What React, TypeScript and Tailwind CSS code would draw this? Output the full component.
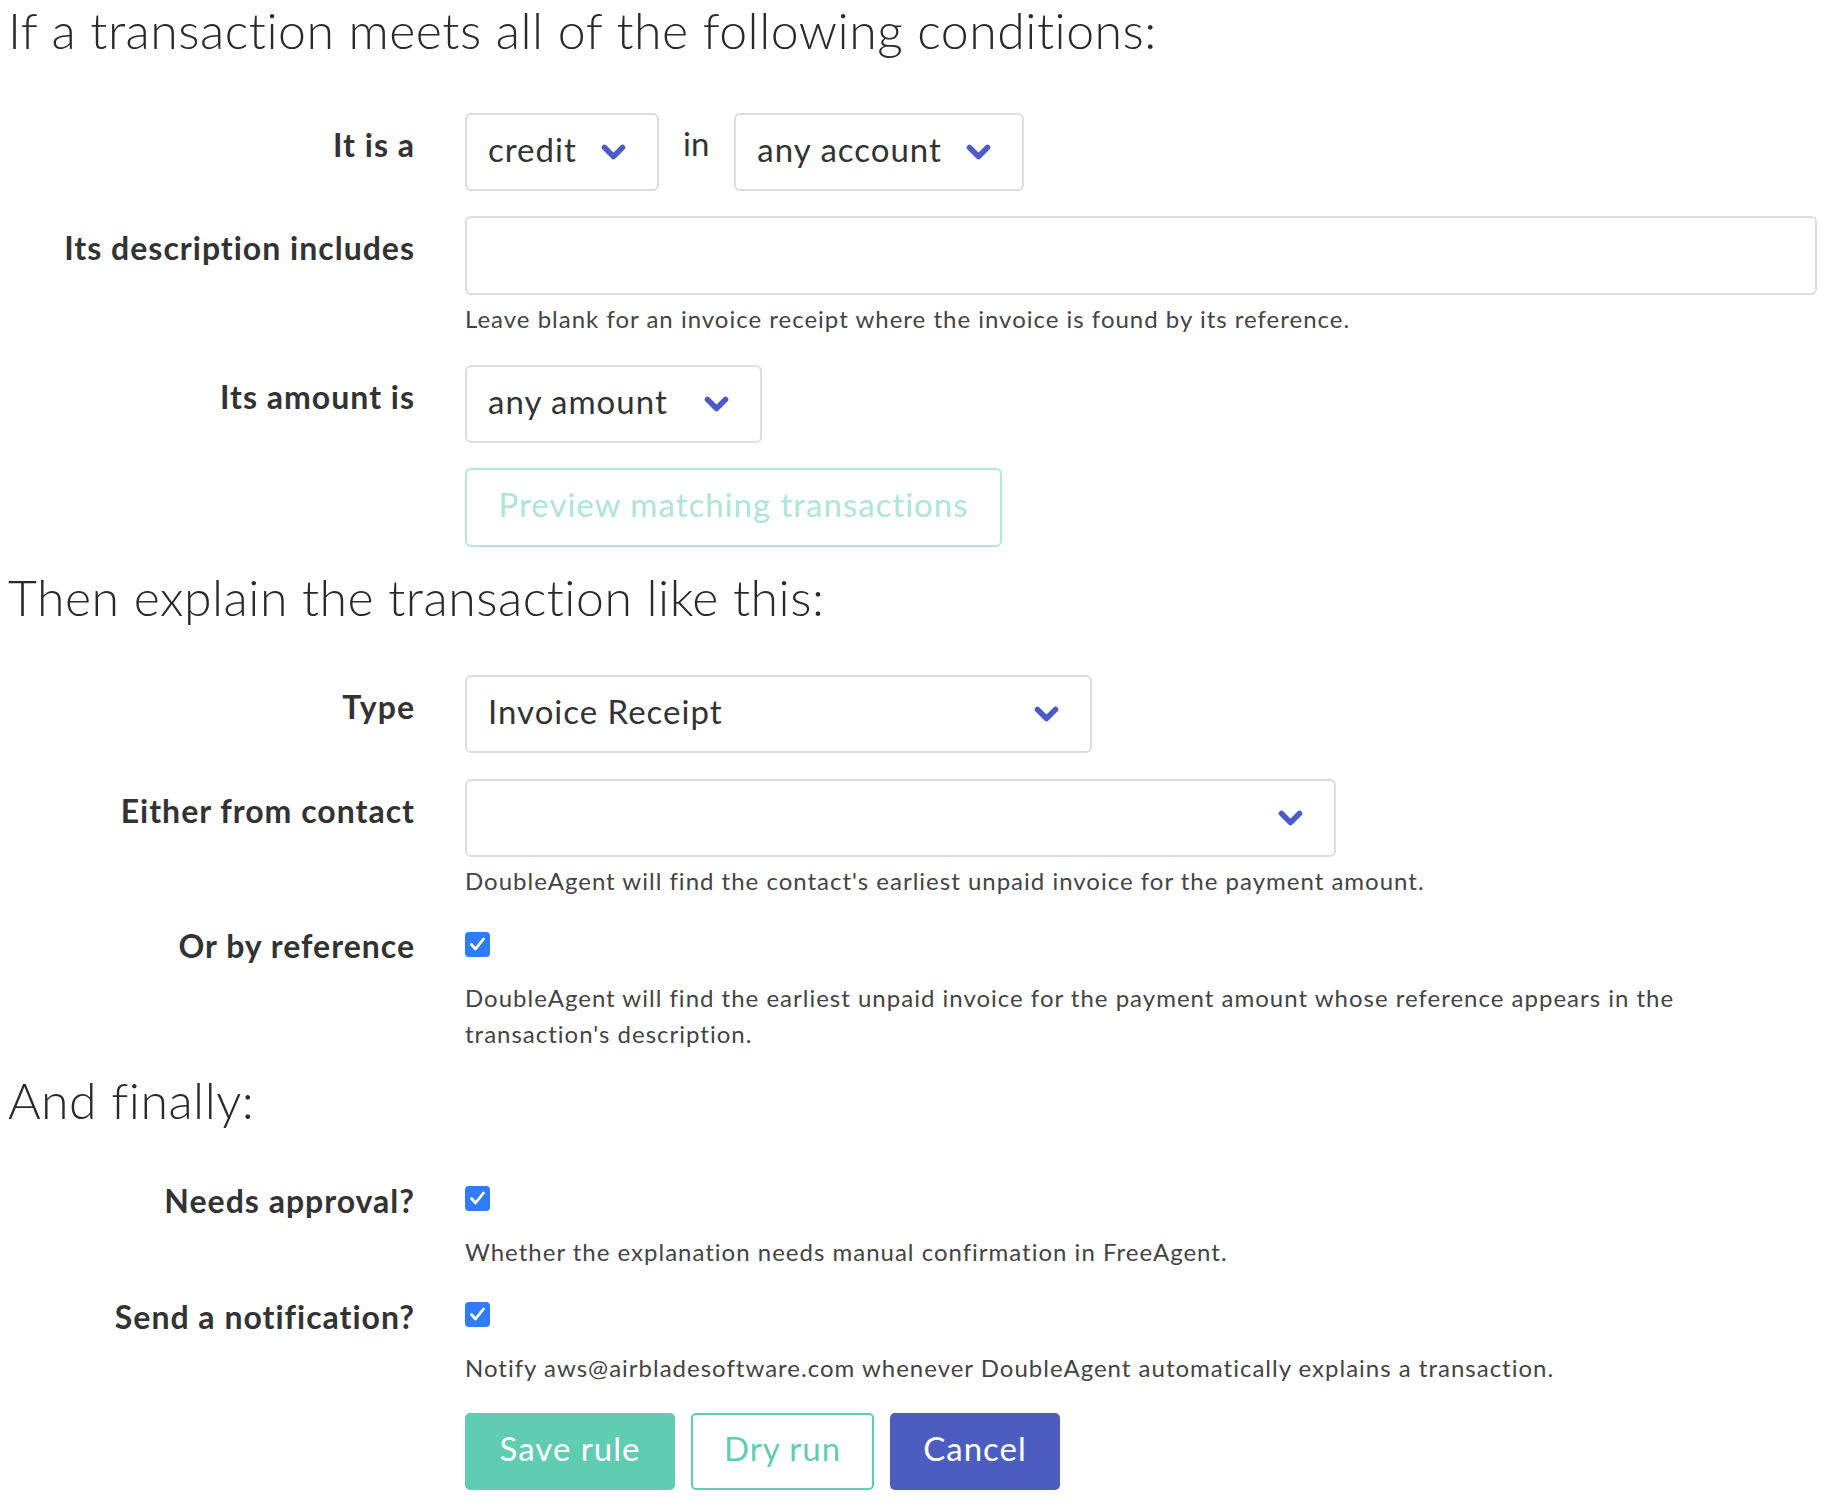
import React from "react";

function Chevron() {
  return (
    <svg width="25" height="17" viewBox="0 0 25 17" className="shrink-0">
      <polyline
        points="3.5,3.5 12.5,12.5 21.5,3.5"
        fill="none"
        stroke="#4a5bc6"
        strokeWidth="5.5"
        strokeLinecap="round"
        strokeLinejoin="round"
      />
    </svg>
  );
}

function Select({ text, className }: { text: string; className: string }) {
  return (
    <div
      className={`flex items-center justify-between h-[78px] border-2 border-[#dddddd] rounded-[6px] pl-[21px] pr-[31px] text-[33px] tracking-[1px] text-[#333] bg-white ${className}`}
    >
      <span className="leading-[40px] pb-[6px]">{text}</span>
      <Chevron />
    </div>
  );
}

function Check() {
  return (
    <span className="flex items-center justify-center w-[25px] h-[25px] rounded-[4px] bg-[#2f7cf6]">
      <svg width="25" height="25" viewBox="0 0 25 25">
        <polyline
          points="6.5,12.5 10.5,17 18.5,7"
          fill="none"
          stroke="white"
          strokeWidth="2.8"
          strokeLinecap="round"
          strokeLinejoin="round"
        />
      </svg>
    </span>
  );
}

function Label({ children, className }: { children: React.ReactNode; className: string }) {
  return (
    <div
      className={`text-right font-bold text-[32px] leading-[40px] tracking-[1px] text-[#333] whitespace-nowrap ${className}`}
    >
      {children}
    </div>
  );
}

function Help({ children, className }: { children: React.ReactNode; className: string }) {
  return (
    <p className={`text-[24px] leading-[36px] tracking-[1px] text-[#444] whitespace-nowrap ${className}`}>
      {children}
    </p>
  );
}

export default function App() {
  return (
    <div className="w-full min-h-screen bg-white pr-[17px] font-['Lato',sans-serif] text-[#333]">
      <h1 className="pl-[8px] text-[50px] leading-[60px] font-light tracking-[0.5px] text-[#2a2a2a]">
        If a transaction meets all of the following conditions:
      </h1>

      {/* It is a */}
      <div className="grid grid-cols-[415px_1fr] gap-x-[50px] mt-[53px]">
        <Label className="pt-[12px]">It is a</Label>
        <div className="flex items-start">
          <Select text="credit" className="w-[194px]" />
          <span className="text-[33px] leading-[40px] pt-[10px] ml-[24px] mr-[25px]">in</span>
          <Select text="any account" className="w-[290px]" />
        </div>
      </div>

      {/* description */}
      <div className="grid grid-cols-[415px_1fr] gap-x-[50px] mt-[25px]">
        <Label className="pt-[12px]">Its description includes</Label>
        <div>
          <div className="h-[79px] w-full border-2 border-[#dddddd] rounded-[6px] bg-white" />
          <Help className="mt-[6px]">
            Leave blank for an invoice receipt where the invoice is found by its reference.
          </Help>
        </div>
      </div>

      {/* amount */}
      <div className="grid grid-cols-[415px_1fr] gap-x-[50px] mt-[28px]">
        <Label className="pt-[12px]">Its amount is</Label>
        <div>
          <Select text="any amount" className="w-[297px]" />
          <button className="mt-[25px] h-[79px] w-[537px] border-2 border-[#b2e8d9] rounded-[6px] text-[33px] tracking-[1px] text-[#ade6d6] bg-white flex items-center justify-center">
            <span className="pb-[6px] whitespace-nowrap">Preview matching transactions</span>
          </button>
        </div>
      </div>

      <h2 className="pl-[8px] mt-[20px] text-[50px] leading-[60px] font-light tracking-[0.5px] text-[#2a2a2a]">
        Then explain the transaction like this:
      </h2>

      {/* Type */}
      <div className="grid grid-cols-[415px_1fr] gap-x-[50px] mt-[48px]">
        <Label className="pt-[12px]">Type</Label>
        <div>
          <Select text="Invoice Receipt" className="w-[627px]" />
        </div>
      </div>

      {/* contact */}
      <div className="grid grid-cols-[415px_1fr] gap-x-[50px] mt-[26px]">
        <Label className="pt-[12px]">Either from contact</Label>
        <div>
          <Select text="" className="w-[871px]" />
          <Help className="mt-[6px]">
            DoubleAgent will find the contact's earliest unpaid invoice for the payment amount.
          </Help>
        </div>
      </div>

      {/* reference */}
      <div className="grid grid-cols-[415px_1fr] gap-x-[50px] mt-[27px]">
        <Label className="">Or by reference</Label>
        <div className="pt-[6px]">
          <Check />
          <Help className="mt-[23px]">
            DoubleAgent will find the earliest unpaid invoice for the payment amount whose reference appears in the
            <br />
            transaction's description.
          </Help>
        </div>
      </div>

      <h2 className="pl-[8px] mt-[18px] text-[50px] leading-[60px] font-light tracking-[0.5px] text-[#2a2a2a]">
        And finally:
      </h2>

      {/* approval */}
      <div className="grid grid-cols-[415px_1fr] gap-x-[50px] mt-[51px]">
        <Label className="">Needs approval?</Label>
        <div className="pt-[5px]">
          <Check />
          <Help className="mt-[23px]">
            Whether the explanation needs manual confirmation in FreeAgent.
          </Help>
        </div>
      </div>

      {/* notification */}
      <div className="grid grid-cols-[415px_1fr] gap-x-[50px] mt-[27px]">
        <Label className="">Send a notification?</Label>
        <div className="pt-[5px]">
          <Check />
          <Help className="mt-[23px]">
            Notify aws@airbladesoftware.com whenever DoubleAgent automatically explains a transaction.
          </Help>
        </div>
      </div>

      {/* buttons */}
      <div className="grid grid-cols-[415px_1fr] gap-x-[50px] mt-[27px] pb-[18px]">
        <div />
        <div className="flex gap-[16px]">
          <button className="h-[77px] w-[210px] flex items-center justify-center rounded-[5px] bg-[#5fcdb2] text-white text-[33px] tracking-[1px]">
            <span className="block pb-[6px] whitespace-nowrap">Save rule</span>
          </button>
          <button className="h-[77px] w-[183px] flex items-center justify-center rounded-[5px] border-2 border-[#5fcdb2] bg-white text-[#5fcdb2] text-[33px] tracking-[1px]">
            <span className="block pb-[6px] whitespace-nowrap">Dry run</span>
          </button>
          <button className="h-[77px] w-[170px] flex items-center justify-center rounded-[5px] bg-[#4b5ec0] text-white text-[33px] tracking-[1px]">
            <span className="block pb-[6px] whitespace-nowrap">Cancel</span>
          </button>
        </div>
      </div>
    </div>
  );
}
